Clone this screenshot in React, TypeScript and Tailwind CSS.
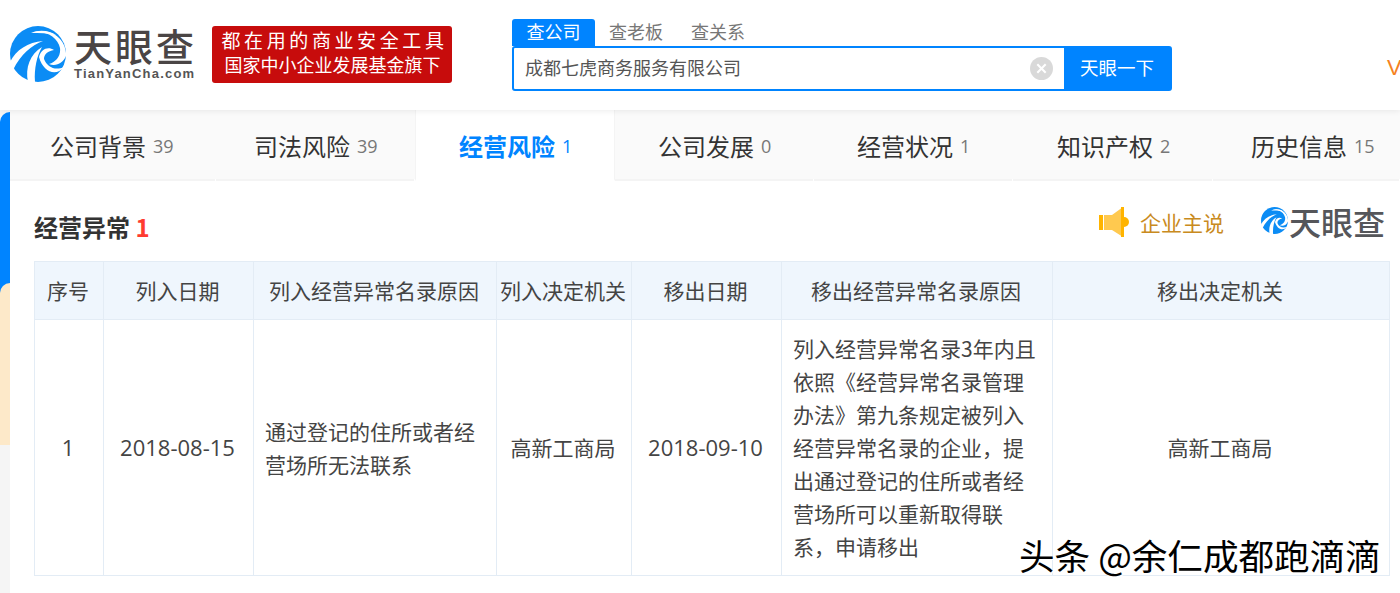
const F = "[font-family:'Noto_Sans_CJK_SC','Liberation_Sans',sans-serif]";

function Logo({ size }: { size: number }) {
  return (
    <svg width={size} height={size} viewBox="0 0 56 56" className="shrink-0">
      <circle cx="28" cy="28" r="28" fill="#0b8cf5" />
      <path d="M56 30C57 14 42 1 24 6C38 5 48 12 50 22C51 30 46 36 39 38C46 41 53 37 56 30Z" fill="#fff" />
      <path d="M21 7C30 3 40 5 46 9C38 7 29 7 21 7Z" fill="#fff" />
      <path d="M0 36C6 24 18 16 33 15C22 19 11 28 3 44Z" fill="#fff" />
      <path d="M18 56C15 42 20 28 32 21C27 30 24 42 25 56Z" fill="#fff" />
      <path d="M29 31C31 23 38 20 44 24C38 25 34 28 34 33C37 41 45 45 54 41C46 51 33 46 29 31Z" fill="#fff" />
    </svg>
  );
}

function Tab({ name, n, active, w }: { name: string; n: string; active?: boolean; w: string }) {
  return (
    <div className={`${w} relative h-full flex items-center gap-[7px] border-b-2 after:absolute after:right-0 after:bottom-[-2px] after:w-[1px] after:h-[2px] after:bg-white ${active ? "bg-white border-b-white border-x border-x-[#f4f4f4] text-[#0084ff] font-bold" : "border-[#f4f4f4] text-[#333]"}`}>
      <span className="text-[24px] leading-none pt-[2px]">{name}</span>
      <span className={`text-[18px] leading-none pt-[3px] font-normal font-['Open_Sans'] ${active ? "text-[#0084ff]" : "text-[#777]"}`}>{n}</span>
    </div>
  );
}

const th = "border border-[#e3ecf5] bg-[#eff6fd] font-normal text-[21px] text-[#444] text-center pr-[2px]";
const td = "border border-[#e3ecf5] text-[21px] leading-[33px] text-[#444]";
const num = "font-['Open_Sans'] text-[22px]";

export default function App() {
  return (
    <div className={`relative w-[1400px] h-[593px] overflow-hidden bg-white ${F}`}>
      <header className="relative z-10 h-[110px] flex items-start bg-white shadow-[0_1px_6px_rgba(0,0,0,0.08)]">
        <div className="ml-[10px] mt-[26px] flex items-center w-[185px] shrink-0">
          <Logo size={56} />
          <div className="ml-[8px] flex flex-col whitespace-nowrap">
            <span className="text-[38px] leading-[40px] tracking-[3px] font-medium text-[#4a4545] -mt-[1px]">天眼查</span>
            <span className="text-[13px] leading-[16px] font-bold tracking-[1.2px] text-[#555] mt-[1px] font-['Liberation_Sans']">TianYanCha.com</span>
          </div>
        </div>
        <div className="ml-[17px] mt-[26px] w-[240px] h-[57px] rounded-[3px] bg-[#c70c0c] text-white flex flex-col items-center justify-center pb-[5px]">
          <span className="text-[19px] leading-[24px] tracking-[3.6px] pl-[5px]">都在用的商业安全工具</span>
          <span className="text-[18px] leading-[24px] pl-[1px]">国家中小企业发展基金旗下</span>
        </div>
        <div className="ml-[60px] mt-[19px] w-[660px]">
          <div className="flex h-[27px] items-center text-[18px] text-[#777]">
            <span className="w-[83px] h-full rounded-t-[3px] bg-[#0084ff] text-white flex items-center justify-center pb-[2px]">查公司</span>
            <span className="w-[82px] text-center pb-[2px]">查老板</span>
            <span className="w-[82px] text-center pb-[2px]">查关系</span>
          </div>
          <div className="flex h-[45px] rounded-[3px] border-2 border-[#0084ff]">
            <div className="flex-1 flex items-center pl-[11px] pb-[2px] text-[18px] text-[#555]">成都七虎商务服务有限公司</div>
            <div className="flex items-center pr-[11px] pb-[1px]">
              <svg width="23" height="23" viewBox="0 0 22 22">
                <circle cx="11" cy="11" r="11" fill="#d9d9d9" />
                <path d="M7 7L15 15M15 7L7 15" stroke="#fff" strokeWidth="2" />
              </svg>
            </div>
            <div className="w-[106px] bg-[#0084ff] text-white text-[18.5px] flex items-center justify-center pb-[2px]">天眼一下</div>
          </div>
        </div>
        <span className="absolute left-[1387px] top-[54px] text-[22px] leading-[28px] text-[#f5821f] font-['Liberation_Sans']">V</span>
      </header>

      <div className="flex">
        <aside className="w-[10px] shrink-0 h-[483px] flex flex-col pt-[2px] bg-[#f5f5f5]">
          <div className="h-[333px] bg-[#0084ff] rounded-tl-[10px]">
            <div className="mt-[171px] h-[162px] bg-[#fde9c9] rounded-tl-[10px]" />
          </div>
        </aside>
        <main className="flex-1 min-w-0">
          <nav className="flex h-[71px] items-stretch bg-[#fafafa]">
            <Tab name="公司背景" n="39" w="w-[206px] pl-[40px]" />
            <Tab name="司法风险" n="39" w="w-[199px] pl-[38px]" />
            <Tab name="经营风险" n="1" w="w-[200px] pl-[43px]" active />
            <Tab name="公司发展" n="0" w="w-[199px] pl-[43px]" />
            <Tab name="经营状况" n="1" w="w-[199px] pl-[43px]" />
            <Tab name="知识产权" n="2" w="w-[200px] pl-[44px]" />
            <Tab name="历史信息" n="15" w="w-[187px] pl-[38px]" />
          </nav>
          <section className="pl-[24px] pr-[10px]">
            <div className="flex items-center h-[80px]">
              <h2 className="text-[24px] font-bold text-[#333] mt-[12px]">
                经营异常 <span className="text-[#ff3b30]">1</span>
              </h2>
              <div className="ml-auto flex items-center mt-[1px] mr-[5px]">
                <svg width="30" height="32" viewBox="0 0 30 32">
                  <rect x="0" y="9" width="4" height="15" fill="#ffb400" />
                  <path d="M5 9H13L24 1V31L13 24H5Z" fill="#ffc94f" />
                  <rect x="22" y="1" width="3" height="30" fill="#ffb400" />
                  <path d="M25 11A5 5 0 0 1 25 21Z" fill="#ffb400" />
                </svg>
                <span className="ml-[11px] text-[21px] text-[#c98a20] mt-[2px]">企业主说</span>
                <div className="ml-[37px] flex items-center -mt-[2px]">
                  <Logo size={27} />
                  <span className="ml-[1px] text-[32px] leading-none font-medium text-[#55565a]">天眼查</span>
                </div>
              </div>
            </div>
            <table className="w-[1355px] table-fixed border-collapse">
              <colgroup>
                <col className="w-[69px]" />
                <col className="w-[150px]" />
                <col className="w-[243px]" />
                <col className="w-[135px]" />
                <col className="w-[150px]" />
                <col className="w-[271px]" />
                <col className="w-[337px]" />
              </colgroup>
              <thead>
                <tr className="h-[58px]">
                  <th className={th}>序号</th>
                  <th className={th}>列入日期</th>
                  <th className={th}>列入经营异常名录原因</th>
                  <th className={th}>列入决定机关</th>
                  <th className={th}>移出日期</th>
                  <th className={th}>移出经营异常名录原因</th>
                  <th className={th}>移出决定机关</th>
                </tr>
              </thead>
              <tbody>
                <tr className="h-[256px]">
                  <td className={`${td} ${num} text-center pr-[2px]`}>1</td>
                  <td className={`${td} ${num} text-center pr-[2px]`}>2018-08-15</td>
                  <td className={`${td} pl-[11px] pr-[13px]`}>通过登记的住所或者经营场所无法联系</td>
                  <td className={`${td} text-center pr-[2px]`}>高新工商局</td>
                  <td className={`${td} ${num} text-center pr-[2px]`}>2018-09-10</td>
                  <td className={`${td} pl-[11px] pr-[13px]`}>列入经营异常名录3年内且依照《经营异常名录管理办法》第九条规定被列入经营异常名录的企业，提出通过登记的住所或者经营场所可以重新取得联系，申请移出</td>
                  <td className={`${td} text-center pr-[2px]`}>高新工商局</td>
                </tr>
              </tbody>
            </table>
          </section>
        </main>
      </div>

      <div className="absolute z-20 left-[1019px] top-[535px] text-[35.6px] leading-[40px] whitespace-nowrap text-black [text-shadow:1px_1px_0_#fff,-1px_-1px_0_#fff]">
        头条 @余仁成都跑滴滴
      </div>
    </div>
  );
}
